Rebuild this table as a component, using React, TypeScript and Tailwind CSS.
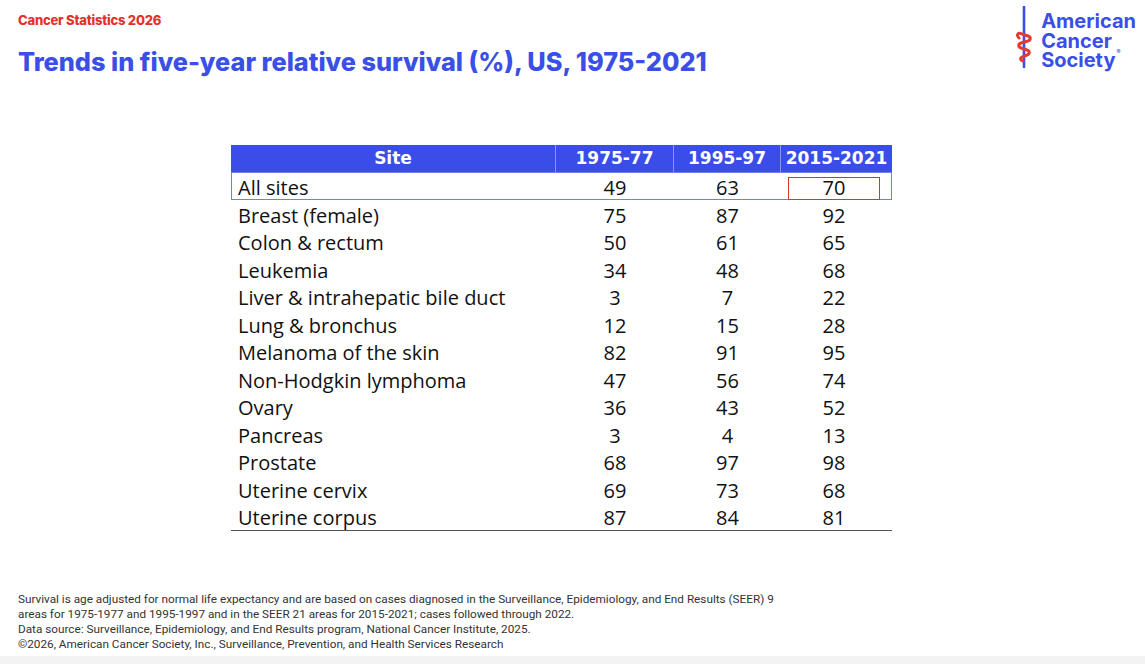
const rows: [string, number, number, number][] = [
  ["All sites", 49, 63, 70],
  ["Breast (female)", 75, 87, 92],
  ["Colon & rectum", 50, 61, 65],
  ["Leukemia", 34, 48, 68],
  ["Liver & intrahepatic bile duct", 3, 7, 22],
  ["Lung & bronchus", 12, 15, 28],
  ["Melanoma of the skin", 82, 91, 95],
  ["Non-Hodgkin lymphoma", 47, 56, 74],
  ["Ovary", 36, 43, 52],
  ["Pancreas", 3, 4, 13],
  ["Prostate", 68, 97, 98],
  ["Uterine cervix", 69, 73, 68],
  ["Uterine corpus", 87, 84, 81],
];

const Logo = () => (
  <div className="flex items-start gap-[5px]">
    <svg width="20" height="64" viewBox="0 0 20 64" className="mt-[6px]">
      {/* blade */}
      <line x1="8" y1="1" x2="8" y2="61" stroke="#3a4fe6" strokeWidth="2.6" strokeLinecap="round" />
      {/* snake coil */}
      <path
        d="M3 32 C0 29 2 26 6 28 L12 30 C15 31 15 34 12 35 L5 37 C2 38 2 41 5 42 L11 44 C14 45 14 48 11 49 L6 51 C4 52 4 54 7 55"
        fill="none"
        stroke="#e33a36"
        strokeWidth="3"
        strokeLinecap="round"
      />
    </svg>
    <div
      className="relative flex flex-col text-[20px] leading-[19.5px] font-bold text-[#3a4fe6] mt-[12px]"
      style={{ fontFamily: "Inter, 'Open Sans', sans-serif" }}
    >
      <span>American</span>
      <span>Cancer</span>
      <span className="relative">
        Society
        <span className="absolute top-[-2px] text-[6px] leading-[6px] ml-[1px]">®</span>
      </span>
    </div>
  </div>
);

export default function App() {
  return (
    <div className="w-[1145px] h-[664px] bg-white flex flex-col overflow-hidden" style={{ fontFamily: "'Open Sans', sans-serif" }}>
      <div className="flex justify-between pl-[18px] pr-[9px]">
        <div className="flex flex-col pt-[11px]">
          <div className="text-[13px] leading-[18px] font-extrabold text-[#e2312d] tracking-[-0.2px]" style={{ fontFamily: "Inter, sans-serif" }}>
            Cancer Statistics 2026
          </div>
          <h1 className="mt-[17px] text-[25.3px] leading-[32px] font-extrabold text-[#3a4fe6]" style={{ fontFamily: "Inter, sans-serif" }}>
            Trends in five-year relative survival (%), US, 1975-2021
          </h1>
        </div>
        <Logo />
      </div>

      <div className="ml-[231px] mt-[67px] w-[661px]">
        <div
          className="grid grid-cols-[324px_118px_107px_112px] bg-[#3a4de8] text-white text-[17px] leading-[27px] font-bold h-[27px]"
          style={{ fontFamily: "'DejaVu Sans', sans-serif" }}
        >
          <div className="text-center">Site</div>
          <div className="text-center border-l border-[#8a97f2]">1975-77</div>
          <div className="text-center border-l border-[#8a97f2]">1995-97</div>
          <div className="text-center border-l border-[#8a97f2]">2015-2021</div>
        </div>
        <div className="border-b-[1.5px] border-[#555]">
          {rows.map(([site, a, b, c], i) => (
            <div
              key={site}
              className={
                "grid grid-cols-[324px_118px_107px_112px] h-[27.5px] items-center text-[20px] text-[#111] " +
                (i === 0 ? "border border-[#6f7ef0]" : "border border-transparent")
              }
            >
              <div className="pl-[6px]">{site}</div>
              <div className="text-center">{a}</div>
              <div className="text-center">{b}</div>
              <div className="flex justify-start pl-[7px]">
                {i === 0 ? (
                  <div className="w-[92px] h-[23px] border-[1.5px] border-[#d8332f] flex items-center justify-center">{c}</div>
                ) : (
                  <span className="w-[92px] text-center">{c}</span>
                )}
              </div>
            </div>
          ))}
        </div>
      </div>

      <div
        className="mt-auto pl-[18px] pb-[4px] text-[11.75px] leading-[15px] text-[#333]"
        style={{ fontFamily: "Roboto, sans-serif" }}
      >
        <p>
          Survival is age adjusted for normal life expectancy and are based on cases diagnosed in the Surveillance, Epidemiology, and End Results (SEER) 9
        </p>
        <p>areas for 1975-1977 and 1995-1997 and in the SEER 21 areas for 2015-2021; cases followed through 2022.</p>
        <p>Data source: Surveillance, Epidemiology, and End Results program, National Cancer Institute, 2025.</p>
        <p>©2026, American Cancer Society, Inc., Surveillance, Prevention, and Health Services Research</p>
      </div>
      <div className="h-[8px] bg-[#f3f3f3]" />
    </div>
  );
}
